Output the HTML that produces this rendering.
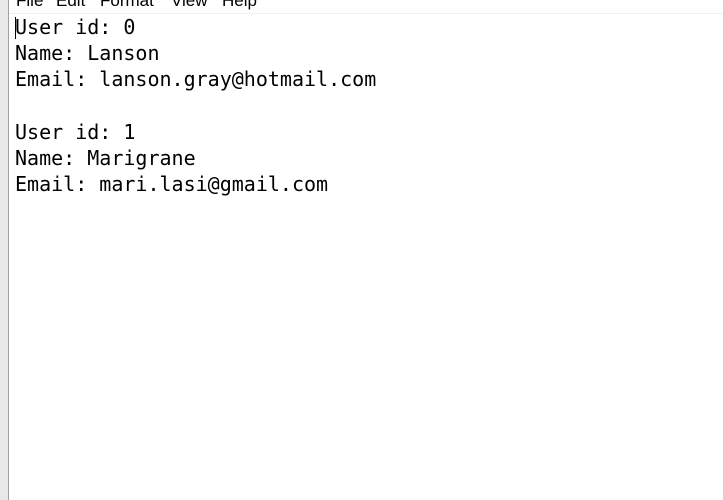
<!DOCTYPE html><html><head><style>
body{margin:0;width:723px;height:500px;overflow:hidden;background:#fff;position:relative;font-family:"Liberation Sans",sans-serif}
.left{position:absolute;left:0;top:0;width:8px;height:500px;background:#e8e8e8;border-right:1px solid #a0a0a0}
.menu{position:absolute;left:9px;top:0;right:0;height:13px;background:#fff;border-bottom:1px solid #f0f0f0;font-size:17px;color:#000}
.menu span{position:absolute;top:-9px;line-height:20px}
.txt{position:absolute;left:15px;top:14px;font-family:"DejaVu Sans Mono","Liberation Mono",monospace;font-size:20px;line-height:26.2px;white-space:pre;color:#000}
.caret{position:absolute;left:15px;top:17px;width:1px;height:22px;background:#000}
</style></head><body>
<div class="left"></div>
<div class="menu"><span style="left:7px">File</span><span style="left:47px">Edit</span><span style="left:91px">Format</span><span style="left:162px">View</span><span style="left:213px">Help</span></div>
<div class="txt">User id: 0
Name: Lanson
Email: lanson.gray@hotmail.com

User id: 1
Name: Marigrane
Email: mari.lasi@gmail.com</div>
<div class="caret"></div>
</body></html>
